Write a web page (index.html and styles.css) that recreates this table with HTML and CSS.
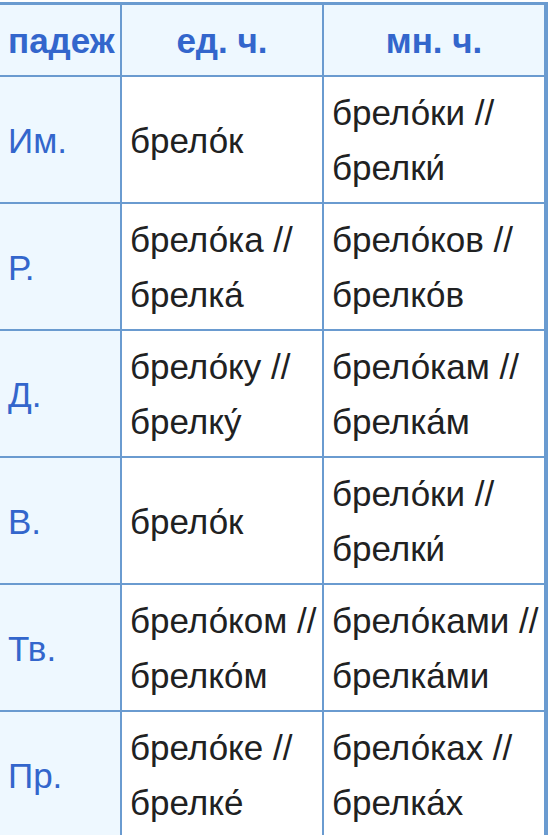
FILE: index.html
```html
<!DOCTYPE html>
<html lang="ru">
<head>
<meta charset="utf-8">
<title>брелок</title>
<link rel="stylesheet" href="styles.css">
</head>
<body>
<table class="decl">
  <thead>
    <tr>
      <th class="hd hd-case c-case">падеж</th>
      <th class="hd c-sg">ед. ч.</th>
      <th class="hd c-pl">мн. ч.</th>
    </tr>
  </thead>
  <tbody>
    <tr>
      <th class="case">Им.</th>
      <td>брело́к</td>
      <td>брело́ки //<br>брелки́</td>
    </tr>
    <tr>
      <th class="case">Р.</th>
      <td>брело́ка //<br>брелка́</td>
      <td>брело́ков //<br>брелко́в</td>
    </tr>
    <tr>
      <th class="case">Д.</th>
      <td>брело́ку //<br>брелку́</td>
      <td>брело́кам //<br>брелка́м</td>
    </tr>
    <tr>
      <th class="case">В.</th>
      <td>брело́к</td>
      <td>брело́ки //<br>брелки́</td>
    </tr>
    <tr>
      <th class="case">Тв.</th>
      <td>брело́ком //<br>брелко́м</td>
      <td>брело́ками //<br>брелка́ми</td>
    </tr>
    <tr>
      <th class="case">Пр.</th>
      <td>брело́ке //<br>брелке́</td>
      <td>брело́ках //<br>брелка́х</td>
    </tr>
  </tbody>
</table>
</body>
</html>
```

FILE: styles.css
```css
html, body {
  margin: 0;
  padding: 0;
  background: #ffffff;
}

body {
  font-family: "Liberation Sans", Arial, sans-serif;
  font-size: 35px;
  color: #202122;
}

.decl {
  border-collapse: separate;
  border-spacing: 0;
  table-layout: fixed;
  margin: 2px 0 0 -2px;
  width: 550px;
  border-top: 3px solid #6a9bd0;
  border-right: 2px solid #6a9bd0;
}

.c-case { width: 124px; }
.c-sg { width: 202px; }
.c-pl { width: 222px; }

.decl th,
.decl td {
  box-sizing: border-box;
  border-right: 2px solid #6a9bd0;
  border-bottom: 2px solid #6a9bd0;
  padding: 8px 0 7px 8px;
  line-height: 55px;
  vertical-align: middle;
  white-space: nowrap;
  overflow: hidden;
  text-align: left;
  font-weight: normal;
}

.decl .hd {
  background: #eef8ff;
  color: #3366cc;
  font-weight: bold;
  text-align: center;
  padding-left: 0;
}

.decl .hd-case {
  border-left: 2px solid #6a9bd0;
  text-align: left;
  padding-left: 8px;
}

.decl .case {
  background: #eef8ff;
  color: #3366cc;
  border-left: 2px solid #6a9bd0;
}
```
